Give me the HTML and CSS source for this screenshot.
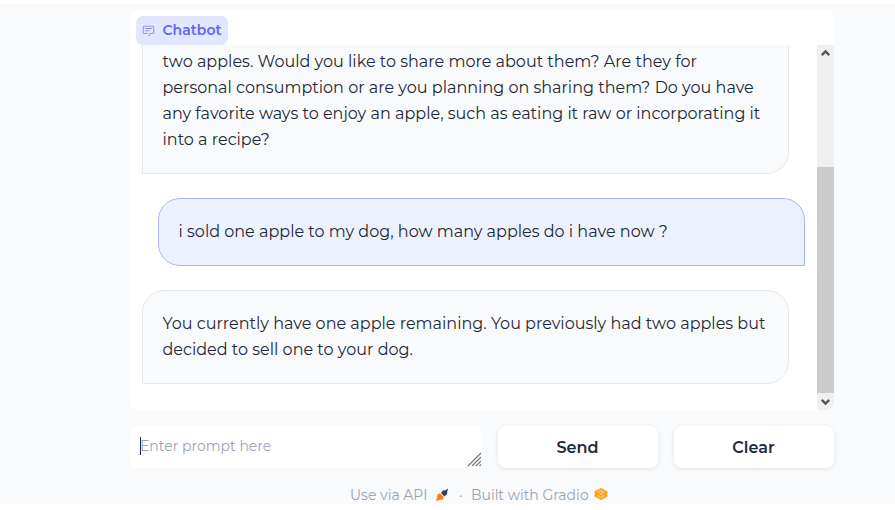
FILE: index.html
```html
<!DOCTYPE html>
<html lang="en">
<head>
<meta charset="utf-8">
<title>Chatbot</title>
<link rel="stylesheet" href="styles.css">
</head>
<body>
<main class="app">
  <section class="chatbot">
    <header class="chat-head">
      <div class="chat-label">
        <svg class="label-icon" viewBox="0 0 32 32" fill="currentColor"><path d="M17.74 30 16 29l4-7h6a2 2 0 0 0 2-2V8a2 2 0 0 0-2-2H6a2 2 0 0 0-2 2v12a2 2 0 0 0 2 2h9v2H6a4 4 0 0 1-4-4V8a4 4 0 0 1 4-4h20a4 4 0 0 1 4 4v12a4 4 0 0 1-4 4h-4.84Z"/><path d="M8 10h16v2H8zM8 16h10v2H8z"/></svg>
        <span class="label-text">Chatbot</span>
      </div>
    </header>
    <div class="chat-body">
      <div class="messages">
        <div class="message bot first">
          <span class="line">two apples. Would you like to share more about them? Are they for</span>
          <span class="line">personal consumption or are you planning on sharing them? Do you have</span>
          <span class="line">any favorite ways to enjoy an apple, such as eating it raw or incorporating it</span>
          <span class="line">into a recipe?</span>
        </div>
        <div class="message user">
          <span class="line">i sold one apple to my dog, how many apples do i have now ?</span>
        </div>
        <div class="message bot">
          <span class="line">You currently have one apple remaining. You previously had two apples but</span>
          <span class="line">decided to sell one to your dog.</span>
        </div>
      </div>
      <div class="scrollbar">
        <svg class="arrow" viewBox="0 0 17 17"><path d="M4.800 10.200 8.500 6.500l3.700 3.700"/></svg>
        <div class="track"><div class="thumb"></div></div>
        <svg class="arrow" viewBox="0 0 17 17"><path d="M4.800 6.800 8.500 10.500l3.700-3.700"/></svg>
      </div>
    </div>
  </section>
  <section class="controls">
    <div class="prompt">
      <span class="caret"></span><span class="placeholder">Enter prompt here</span>
      <svg class="grip" viewBox="0 0 15 15"><path d="M1 14 14 1M5 14l9-9M9 14l5-5M12.500 14 14 12.500"/></svg>
    </div>
    <button class="btn">Send</button>
    <button class="btn">Clear</button>
  </section>
  <footer class="footer">
    <span class="api">Use via API</span>
    <svg class="rocket" viewBox="0 0 14 14"><path fill="#374151" d="M6 5 8 2.500l2.500-.3L13 .5l-.7 3L12 6 9.500 8.500Z"/><path fill="#ff7c00" d="M5 5.200 8.500 9l-.5 2.500L5 11.800 1 13.200 2.200 9.500 2.400 6.500Z"/></svg>
    <span class="dot">·</span>
    <span class="built">Built with Gradio</span>
    <svg class="gradio" viewBox="0 0 14 12"><path fill="#ff9c08" fill-rule="evenodd" d="M7 0 13.500 3.600v1.700L12.400 6l1.100.7v1.700L7 12 .5 8.400V6.700L1.600 6 .5 5.300V3.600ZM7 1.700 2.800 4 4.500 5 7 3.700 9.500 5l1.700-1ZM7 10.300 11.200 8 9.500 7 7 8.300 4.500 7 2.800 8Z"/><path fill="#ffb84d" d="M7 1.700 2.800 4 4.500 5 7 3.700 9.500 5l1.700-1ZM7 10.300 11.200 8 9.500 7 7 8.300 4.500 7 2.800 8Z"/><path fill="#ffe0b0" d="m7 4.900 2 1.100-2 1.100L5 6Z"/></svg>
  </footer>
</main>
</body>
</html>
```
FILE: styles.css
```css
* { box-sizing: border-box; }
body {
  margin: 0;
  height: 510px;
  overflow: hidden;
  background: #fff;
  color: #1f2937;
  font-family: Montserrat, Inter, sans-serif;
}
.app {
  margin-top: 4px;
  height: 500px;
  padding: 6px 61px 0 130px;
  background: #f9fafc;
}
.chatbot {
  width: 704px;
  height: 400px;
  display: flex;
  flex-direction: column;
  background: #fff;
  border-radius: 8px;
  overflow: hidden;
}
.chat-head { height: 35px; padding: 6px 0 0 6px; }
.chat-label {
  width: 92px;
  height: 29px;
  padding: 0 0 1px 6px;
  display: flex;
  align-items: center;
  gap: 7.500px;
  border-radius: 7px;
  background: #e0e7ff;
  color: #6366f1;
}
.label-icon { width: 13px; height: 13px; opacity: .8; }
.label-text { font-size: 14px; font-weight: 600; letter-spacing: .05px; white-space: nowrap; }
.chat-body { flex: 1; display: flex; min-height: 0; }
.messages {
  flex: 1;
  padding: 0 12px;
  display: flex;
  flex-direction: column;
  gap: 24px;
}
.message {
  width: 647px;
  flex: none;
  padding: 20px 19.500px;
  border: 1px solid #e5e7eb;
  border-radius: 22px;
  font-size: 16px;
  letter-spacing: .01px;
  line-height: 26px;
}
.bot { background: #f9fafb; border-bottom-left-radius: 0; }
.first {
  height: 129px;
  padding-top: 4px;
  border-top: 0;
  border-top-left-radius: 0;
  border-top-right-radius: 0;
}
.user {
  align-self: flex-end;
  background: #edf1fe;
  border-color: #a5b4fc;
  border-bottom-right-radius: 0;
}
.line { display: block; width: max-content; white-space: nowrap; }
.scrollbar { width: 17px; display: flex; flex-direction: column; background: #f0f0f0; }
.arrow { width: 17px; height: 17px; fill: none; stroke: #555; stroke-width: 2.4; }
.track { flex: 1; padding-top: 105px; }
.thumb { height: 226px; background: #cdcdcd; }
.controls {
  width: 704px;
  margin-top: 16px;
  display: grid;
  grid-template-columns: 352px 160px 160px;
  gap: 16px;
}
.prompt {
  height: 42px;
  padding-left: 10px;
  display: flex;
  align-items: center;
  background: #fff;
  border-radius: 8px;
  color: #9ca3af;
  font-size: 14px;
}
.caret { width: 1px; height: 18px; margin: -3px -1px 0 0; background: #1f2937; }
.placeholder { margin-top: -2px; white-space: nowrap; }
.grip { width: 15px; height: 15px; margin: auto 0 1px auto; fill: none; stroke: #777; stroke-width: 1.2; }
.btn {
  height: 42px;
  padding: 1px 1px 0 0;
  border: 0;
  border-radius: 8px;
  background: #fff;
  box-shadow: 0 1px 4px rgba(0, 0, 0, .1);
  color: #1f2937;
  font: 600 16px/41px Montserrat, Inter, sans-serif;
}
.footer {
  margin-top: 16px;
  padding-left: 220px;
  height: 22px;
  display: flex;
  align-items: center;
  color: #9ca3af;
  font-size: 14px;
  white-space: nowrap;
}
.api { width: 78px; }
.rocket { width: 14px; height: 14px; margin-left: 7px; }
.dot { width: 12px; margin-left: 10px; }
.built { width: 118px; }
.gradio { width: 14px; height: 12px; margin: -2px 0 0 5px; }
```
